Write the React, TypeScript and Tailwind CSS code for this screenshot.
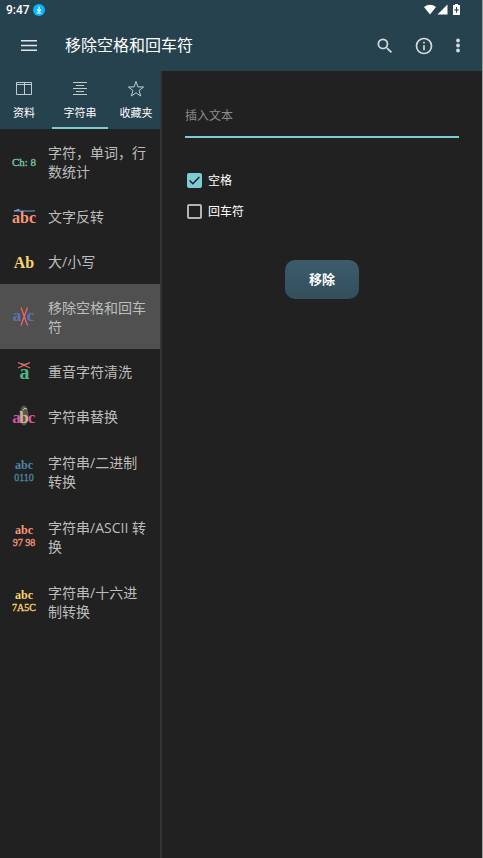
import { useState, type ReactNode } from 'react';

const serif = "font-['Liberation_Serif',serif]";

function Glyph({ children }: { children: ReactNode }) {
  return (
    <svg viewBox="0 0 24 24" className={`h-6 w-6 shrink-0 overflow-visible font-bold ${serif}`} textAnchor="middle" aria-hidden="true">
      {children}
    </svg>
  );
}

function TwoLine({ color, code }: { color: string; code: string }) {
  return (
    <Glyph>
      <text x="12" y="9" fontSize="12" fill={color}>abc</text>
      <text x="12" y="21" fontSize="10" fill={color} fontWeight="400" stroke={color} strokeWidth="0.3">{code}</text>
    </Glyph>
  );
}

const tools: { label: string; tall?: boolean; icon: ReactNode }[] = [
  {
    label: '字符，单词，行数统计',
    tall: true,
    icon: <Glyph><text x="12" y="16" fontSize="11" fontWeight="400" fill="#78cfa5" stroke="#78cfa5" strokeWidth="0.3">Ch: 8</text></Glyph>,
  },
  {
    label: '文字反转',
    icon: (
      <Glyph>
        <text x="12" y="18" fontSize="16" fill="#f6967a">abc</text>
        <path d="M2 6h21M2 6l5-1.800v1.800" stroke="#6e9fd8" fill="#6e9fd8" />
      </Glyph>
    ),
  },
  { label: '大/小写', icon: <Glyph><text x="12" y="18" fontSize="16" fill="#fbd36c">Ab</text></Glyph> },
  {
    label: '移除空格和回车符',
    tall: true,
    icon: (
      <Glyph>
        <text x="5" y="16" fontSize="17" fill="#6070b8">a</text>
        <text x="18.500" y="16" fontSize="17" fill="#6070b8">c</text>
        <path d="M9 2.500 15.500 20.500M15.500 2.500 9 20.500" stroke="#f26868" strokeWidth="1.200" />
      </Glyph>
    ),
  },
  {
    label: '重音字符清洗',
    icon: (
      <Glyph>
        <text x="12.500" y="19" fontSize="20" fill="#4cb68b">a</text>
        <path d="M9 3.500q3.500 2 7 0" stroke="#4cb68b" fill="none" />
        <path d="M6 2.500 18 8M18 2.500 6 8" stroke="#f26868" strokeWidth="1.200" />
      </Glyph>
    ),
  },
  {
    label: '字符串替换',
    icon: (
      <Glyph>
        <ellipse cx="12" cy="10.500" rx="4.500" ry="10" fill="#595653" />
        <text x="4.500" y="18" fontSize="17" fill="#d457a5">a</text>
        <text x="19.500" y="18" fontSize="17" fill="#d457a5">c</text>
        <text x="12" y="18" fontSize="17" fill="#cfb58a">b</text>
        <path d="M11 5q2-3 4-1" stroke="#e2c892" fill="none" />
      </Glyph>
    ),
  },
  { label: '字符串/二进制转换', tall: true, icon: <TwoLine color="#4d86a8" code="0110" /> },
  { label: '字符串/ASCII 转换', tall: true, icon: <TwoLine color="#f6967a" code="97 98" /> },
  { label: '字符串/十六进制转换', tall: true, icon: <TwoLine color="#fbd36c" code="7A5C" /> },
];

const tabs: { label: string; icon: ReactNode }[] = [
  { label: '资料', icon: <path d="M1.500 2.500h15v12h-15zM1.500 4.500h15M9.500 2.500v12" /> },
  { label: '字符串', icon: <path d="M2 2.500h14M5 5.500h8M2 8.500h14M5 11.500h8M2 14.500h14" /> },
  { label: '收藏夹', icon: <path d="m9 1.500 1.900 5.400 5.700.1-4.500 3.500 1.600 5.500L9 12.800 4.300 16l1.600-5.500L1.400 7l5.700-.1z" /> },
];

function Check({ label, initial }: { label: string; initial: boolean }) {
  const [checked, setChecked] = useState(initial);
  return (
    <label className="flex h-[31px] items-center gap-1.5 text-xs text-white">
      <span className="relative h-[15px] w-[15px]">
        <input
          type="checkbox"
          checked={checked}
          onChange={(e) => setChecked(e.target.checked)}
          className="block h-[15px] w-[15px] appearance-none rounded-[2px] border-2 border-[#b4b4b4] checked:border-[#7dcbd3] checked:bg-[#7dcbd3]"
        />
        {checked && (
          <svg viewBox="0 0 16 16" className="pointer-events-none absolute inset-0 h-[15px] w-[15px]" fill="none" stroke="#212121" strokeWidth="1.600" aria-hidden="true">
            <path d="m2.800 8 3.400 3.500 7-7.200" />
          </svg>
        )}
      </span>
      {label}
    </label>
  );
}

export default function App() {
  const [active, setActive] = useState(3);
  const [tab, setTab] = useState(1);
  return (
    <div className="flex min-h-screen flex-col border-r border-[#a0a0a0] bg-[#212121] font-[Roboto,'Noto_Sans_CJK_SC',sans-serif] text-white">
      <header className="bg-[#26424f]">
        <div className="flex h-5 items-center pr-5 pl-1.5">
          <span className="text-xs font-medium">9:47</span>
          <svg viewBox="0 0 12 12" className="ml-[3px] h-3 w-3" aria-hidden="true">
            <circle cx="6" cy="6" r="6" fill="#08b7fb" />
            <path d="M6 2.500v4.500M4 5.500l2 2 2-2M3.700 9h4.600" stroke="#fff" strokeWidth="1.100" fill="none" />
          </svg>
          <svg viewBox="0 0 38 12" className="ml-auto h-3 w-[38px]" fill="#fff" aria-hidden="true">
            <path d="M0 3q6-4.600 12 0L6 10.500z" />
            <path d="M23.500.5v10h-10z" />
            <path fillRule="evenodd" d="M31 0h3v1h2v10h-7V1h2zM32 3v2.200h-1.500v1.400H32V8.800h1V6.600h1.500V5.200H33V3z" />
          </svg>
        </div>
        <div className="flex h-[51px] items-center pr-3.5 pl-[17px]">
          <button type="button" aria-label="菜单" className="h-6 w-6">
            <svg viewBox="0 0 24 24" stroke="#e2e6e8" strokeWidth="1.500" aria-hidden="true">
              <path d="M4 6.800h16M4 11.500h16M4 16.200h16" />
            </svg>
          </button>
          <h1 className="ml-6 flex-1 text-base font-normal">移除空格和回车符</h1>
          <button type="button" aria-label="搜索" className="h-5 w-5">
            <svg viewBox="0 0 24 24" fill="#d3d9dc" aria-hidden="true">
              <path d="M15.500 14h-.79l-.28-.27A6.470 6.470 0 0 0 16 9.500 6.500 6.500 0 1 0 9.500 16c1.610 0 3.090-.59 4.230-1.570l.27.28v.79l5 4.990L20.490 19zm-6 0C7.010 14 5 11.990 5 9.500S7.010 5 9.500 5 14 7.010 14 9.500 11.990 14 9.500 14z" />
            </svg>
          </button>
          <button type="button" aria-label="信息" className="ml-[19px] h-5 w-5">
            <svg viewBox="0 0 24 24" fill="#d3d9dc" aria-hidden="true">
              <path d="M11 7h2v2h-2zm0 4h2v6h-2zm1-9a10 10 0 1 0 0 20 10 10 0 0 0 0-20zm0 18a8 8 0 1 1 0-16 8 8 0 0 1 0 16z" />
            </svg>
          </button>
          <button type="button" aria-label="更多" className="ml-3.5 h-5 w-5">
            <svg viewBox="0 0 20 20" fill="#d3d9dc" aria-hidden="true">
              <circle cx="10" cy="4.500" r="1.900" /><circle cx="10" cy="9.500" r="1.900" /><circle cx="10" cy="14.500" r="1.900" />
            </svg>
          </button>
        </div>
      </header>
      <div className="flex flex-1">
        <aside className="w-[33.6%] max-w-72 border-r-2 border-[#333333]">
          <div className="flex h-[58px] justify-center overflow-hidden bg-[#26424f]">
            {tabs.map((t, i) => (
              <button
                key={t.label}
                type="button"
                onClick={() => setTab(i)}
                className={`flex w-14 shrink-0 flex-col items-center border-b-2 pt-[9px] text-[11px] ${i === tab ? 'border-[#7dcbd3]' : 'border-transparent'}`}
              >
                <svg viewBox="0 0 18 18" className="h-[18px] w-[18px]" fill="none" stroke="#d3dade" strokeWidth="0.900" aria-hidden="true">{t.icon}</svg>
                <span className="mt-2 leading-4">{t.label}</span>
              </button>
            ))}
          </div>
          <nav>
            {tools.map((t, i) => (
              <button
                key={t.label}
                type="button"
                onClick={() => setActive(i)}
                className={`flex w-full items-center gap-3 px-3 text-left text-sm leading-[19px] text-[#bdbdbd] ${t.tall ? 'min-h-[65px]' : 'min-h-[45px]'} ${i === active ? 'bg-[#505050]' : ''}`}
              >
                {t.icon}
                <span className="min-w-0 flex-1 font-['Open_Sans','Noto_Sans_CJK_SC',sans-serif]">{t.label}</span>
              </button>
            ))}
          </nav>
        </aside>
        <main className="flex min-w-0 flex-1 flex-col px-[23px] pt-5">
          <input
            type="text"
            aria-label="插入文本"
            placeholder="插入文本"
            className="h-[47px] w-full border-b-2 border-[#7dcbd3] bg-transparent pt-1 text-xs text-white outline-none placeholder:text-[#8c8c8c]"
          />
          <div className="mt-[27px] pl-0.5">
            <Check label="空格" initial={true} />
            <Check label="回车符" initial={false} />
          </div>
          <button type="button" className="mt-[33px] h-[39px] w-[74px] self-center rounded-[10px] bg-linear-to-b from-[#3c5c6b] to-[#344e5b] text-[13px] font-bold">
            移除
          </button>
        </main>
      </div>
    </div>
  );
}
